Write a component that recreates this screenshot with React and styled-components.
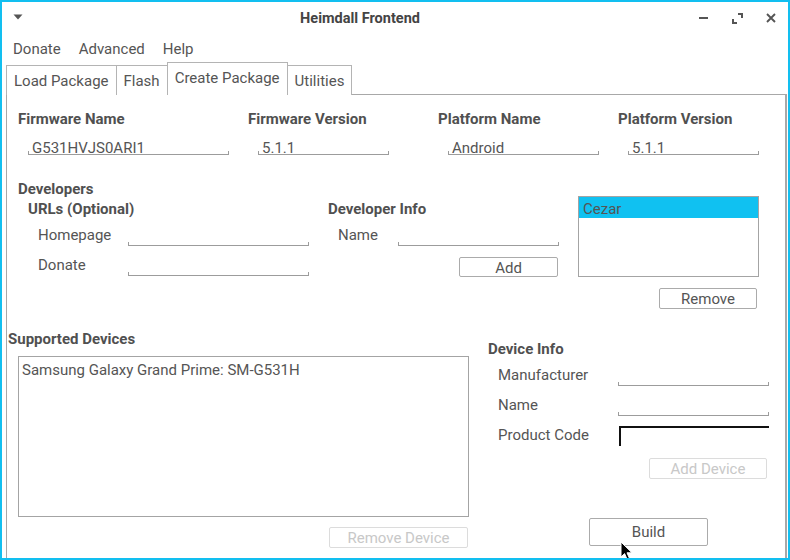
import styled, { createGlobalStyle } from "styled-components";

const GlobalStyle = createGlobalStyle`
  html, body {
    margin: 0;
    padding: 0;
    background: #fff;
  }
  body {
    font-family: Roboto, "Noto Sans", sans-serif;
    font-size: 15px;
    color: #555;
  }
`;

const Window = styled.div`
  position: relative;
  width: 790px;
  height: 560px;
  box-sizing: border-box;
  border: 2px solid #12bff0;
  background: #fff;
  display: flex;
  flex-direction: column;
  overflow: hidden;
`;

const TitleBar = styled.div`
  height: 32px;
  flex-shrink: 0;
  display: flex;
  align-items: center;
`;

const TitleMenuBox = styled.div`
  width: 32px;
  height: 100%;
  display: flex;
  align-items: center;
  justify-content: center;
  padding-bottom: 3px;
  box-sizing: border-box;
`;

const Title = styled.div`
  flex: 1;
  text-align: center;
  font-size: 14.5px;
  font-weight: 700;
  color: #444;
`;

const WinButtons = styled.div`
  display: flex;
`;

const WinButton = styled.div`
  width: 34px;
  height: 32px;
  display: flex;
  align-items: center;
  justify-content: center;
`;

const MenuBar = styled.div`
  height: 28px;
  box-sizing: border-box;
  padding: 1px 0 0 11px;
  flex-shrink: 0;
  display: flex;
  align-items: center;
  gap: 18px;
`;

const MenuItem = styled.span`
  color: #555;
`;

const TabBar = styled.div`
  height: 33px;
  flex-shrink: 0;
  display: flex;
  align-items: flex-end;
  padding-left: 4px;
  margin-bottom: -1px;
`;

const Tab = styled.div`
  position: relative;
  z-index: ${(p) => (p.$active ? 1 : 0)};
  height: ${(p) => (p.$active ? 33 : 30)}px;
  box-sizing: border-box;
  padding: ${(p) => (p.$active ? 0 : 1)}px 7px ${(p) => (p.$active ? 2 : 0)}px;
  border: 1px solid #b4b4b4;
  border-bottom: none;
  background: #fff;
  display: flex;
  align-items: center;
  color: #555;
  & + & {
    margin-left: -1px;
  }
`;

const Panel = styled.div`
  flex: 1;
  margin: 0 1px 0 4px;
  border: 1px solid #a8a8a8;
  border-right-width: 2px;
  border-bottom: none;
  background: #fff;
  display: flex;
  flex-direction: column;
`;

const FirmwareRow = styled.div`
  display: grid;
  grid-template-columns: 230px 190px 180px 1fr;
  padding: 15px 0 0 11px;
`;

const FieldColumn = styled.div`
  display: flex;
  flex-direction: column;
`;

const Label = styled.div`
  font-weight: 700;
  line-height: 18px;
  color: #505050;
`;

const LineEdit = styled.div`
  width: ${(p) => (p.$width ? `${p.$width}px` : "auto")};
  flex: ${(p) => (p.$width ? "none" : 1)};
  height: 22px;
  box-sizing: border-box;
  margin: ${(p) => p.$margin || 0};
  padding: 0 4px;
  border-bottom: 1px solid #9c9c9c;
  background: linear-gradient(#9c9c9c, #9c9c9c) left bottom / 1px 3px no-repeat,
    linear-gradient(#9c9c9c, #9c9c9c) right bottom / 1px 3px no-repeat;
  display: flex;
  align-items: flex-end;
`;

const FocusedEdit = styled.div`
  width: 150px;
  height: 20px;
  margin-left: 1px;
  align-self: flex-end;
  box-sizing: border-box;
  border-top: 2px solid #111;
  border-left: 2px solid #111;
`;

const EditValue = styled.span`
  line-height: 17px;
  margin-bottom: -3px;
  color: #555;
`;

const DevSection = styled.div`
  display: grid;
  grid-template-columns: 560px 181px;
  margin-top: 25px;
  padding-left: 11px;
`;

const DevLeft = styled.div`
  display: flex;
  flex-direction: column;
`;

const DevColumns = styled.div`
  display: flex;
  margin-top: 2px;
  padding-left: 10px;
`;

const SubColumn = styled.div`
  width: ${(p) => p.$width}px;
  display: flex;
  flex-direction: column;
`;

const FormRows = styled.div`
  display: flex;
  flex-direction: column;
  gap: 8px;
  margin-top: ${(p) => p.$top}px;
  padding-left: 10px;
`;

const FormRow = styled.div`
  display: flex;
  align-items: center;
  height: 22px;
`;

const RowLabel = styled.span`
  width: ${(p) => p.$width}px;
  flex-shrink: 0;
  line-height: 18px;
  color: #555;
`;

const DevRight = styled.div`
  display: flex;
  flex-direction: column;
  padding-top: 16px;
`;

const ListBox = styled.div`
  width: ${(p) => p.$width}px;
  height: ${(p) => p.$height}px;
  box-sizing: border-box;
  margin-left: ${(p) => p.$left || 0}px;
  margin-top: ${(p) => p.$top || 0}px;
  border: 1px solid #a4a4a4;
  padding: ${(p) => p.$pad || 0};
  background: #fff;
`;

const ListItem = styled.div`
  height: ${(p) => (p.$selected ? 21 : 18)}px;
  box-sizing: border-box;
  padding-top: ${(p) => (p.$selected ? 3 : 0)}px;
  padding-left: ${(p) => (p.$selected ? 4 : 0)}px;
  line-height: 18px;
  background: ${(p) => (p.$selected ? "#10c1f1" : "transparent")};
  color: #555;
  white-space: nowrap;
`;

const Button = styled.div`
  width: ${(p) => p.$width}px;
  height: ${(p) => p.$height || 21}px;
  box-sizing: border-box;
  margin: ${(p) => p.$margin || 0};
  padding-top: ${(p) => (p.$height === 20 ? 1 : 0)}px;
  align-self: ${(p) => p.$align || "flex-end"};
  border: 1px solid ${(p) => (p.$disabled ? "#dcdcdc" : "#ababab")};
  border-radius: 2px;
  background: #fff;
  display: flex;
  align-items: center;
  justify-content: center;
  color: ${(p) => (p.$disabled ? "#c8c8c8" : "#555")};
`;

const DeviceSection = styled.div`
  display: grid;
  grid-template-columns: 461px 281px;
  column-gap: 19px;
  margin-top: 21px;
  padding-left: 1px;
`;

const DeviceLeft = styled.div`
  display: flex;
  flex-direction: column;
`;

const DeviceRight = styled.div`
  display: flex;
  flex-direction: column;
  padding-top: 10px;
`;

const Cursor = styled.svg`
  position: absolute;
  left: 618px;
  top: 539px;
`;

function LineField({ width, margin, value }) {
  return (
    <LineEdit $width={width} $margin={margin}>
      {value && <EditValue>{value}</EditValue>}
    </LineEdit>
  );
}

const firmware = [
  { label: "Firmware Name", value: "G531HVJS0ARI1", width: 201 },
  { label: "Firmware Version", value: "5.1.1", width: 131 },
  { label: "Platform Name", value: "Android", width: 151 },
  { label: "Platform Version", value: "5.1.1", width: 131 },
];

export default function App() {
  return (
    <>
      <GlobalStyle />
      <Window>
        <TitleBar>
          <TitleMenuBox>
            <svg width="10" height="6" viewBox="0 0 10 6">
              <path d="M0.5 0.5 H9.5 L5 5.5 Z" fill="#555" />
            </svg>
          </TitleMenuBox>
          <Title>Heimdall Frontend</Title>
          <WinButtons>
            <WinButton>
              <svg width="9" height="4" viewBox="0 0 9 4">
                <rect x="0" y="1" width="9" height="2" fill="#555" />
              </svg>
            </WinButton>
            <WinButton>
              <svg width="11" height="11" viewBox="0 0 11 11">
                <path d="M6 1 H10 V5 M1 6 V10 H5" stroke="#555" strokeWidth="2" fill="none" />
              </svg>
            </WinButton>
            <WinButton>
              <svg width="10" height="10" viewBox="0 0 10 10">
                <path d="M1 1 L9 9 M9 1 L1 9" stroke="#555" strokeWidth="1.9" fill="none" />
              </svg>
            </WinButton>
          </WinButtons>
        </TitleBar>

        <MenuBar>
          <MenuItem>Donate</MenuItem>
          <MenuItem>Advanced</MenuItem>
          <MenuItem>Help</MenuItem>
        </MenuBar>

        <TabBar>
          <Tab>Load Package</Tab>
          <Tab>Flash</Tab>
          <Tab $active>Create Package</Tab>
          <Tab>Utilities</Tab>
        </TabBar>

        <Panel>
          <FirmwareRow>
            {firmware.map((f) => (
              <FieldColumn key={f.label}>
                <Label>{f.label}</Label>
                <LineField width={f.width} margin="5px 0 0 10px" value={f.value} />
              </FieldColumn>
            ))}
          </FirmwareRow>

          <DevSection>
            <DevLeft>
              <Label>Developers</Label>
              <DevColumns>
                <SubColumn $width={300}>
                  <Label>URLs (Optional)</Label>
                  <FormRows $top={6}>
                    <FormRow>
                      <RowLabel $width={90}>Homepage</RowLabel>
                      <LineField width={181} />
                    </FormRow>
                    <FormRow>
                      <RowLabel $width={90}>Donate</RowLabel>
                      <LineField width={181} />
                    </FormRow>
                  </FormRows>
                </SubColumn>
                <SubColumn $width={231}>
                  <Label>Developer Info</Label>
                  <FormRows $top={6}>
                    <FormRow>
                      <RowLabel $width={60}>Name</RowLabel>
                      <LineField />
                    </FormRow>
                  </FormRows>
                  <Button $width={99} $height={20} $margin="11px 1px 0 0">
                    Add
                  </Button>
                </SubColumn>
              </DevColumns>
            </DevLeft>
            <DevRight>
              <ListBox $width={181} $height={81}>
                <ListItem $selected>Cezar</ListItem>
              </ListBox>
              <Button $width={98} $margin="11px 2px 0 0">
                Remove
              </Button>
            </DevRight>
          </DevSection>

          <DeviceSection>
            <DeviceLeft>
              <Label>Supported Devices</Label>
              <ListBox $width={451} $height={161} $left={10} $top={8} $pad="4px 3px">
                <ListItem>Samsung Galaxy Grand Prime: SM-G531H</ListItem>
              </ListBox>
              <Button $width={139} $disabled $margin="10px 1px 0 0">
                Remove Device
              </Button>
            </DeviceLeft>
            <DeviceRight>
              <Label>Device Info</Label>
              <FormRows $top={6}>
                <FormRow>
                  <RowLabel $width={120}>Manufacturer</RowLabel>
                  <LineField width={151} />
                </FormRow>
                <FormRow>
                  <RowLabel $width={120}>Name</RowLabel>
                  <LineField width={151} />
                </FormRow>
                <FormRow>
                  <RowLabel $width={120}>Product Code</RowLabel>
                  <FocusedEdit />
                </FormRow>
              </FormRows>
              <Button $width={118} $disabled $margin="12px 2px 0 0">
                Add Device
              </Button>
              <Button $width={119} $height={28} $align="flex-start" $margin="39px 0 0 101px">
                Build
              </Button>
            </DeviceRight>
          </DeviceSection>
        </Panel>

        <Cursor width="14" height="21" viewBox="0 0 14 21">
          <path
            d="M1 1 L1 16 L4.6 12.6 L7.2 18.6 L9.6 17.6 L7 11.8 L12 11.8 Z"
            fill="#000"
            stroke="#fff"
            strokeWidth="1"
            strokeLinejoin="round"
          />
        </Cursor>
      </Window>
    </>
  );
}
